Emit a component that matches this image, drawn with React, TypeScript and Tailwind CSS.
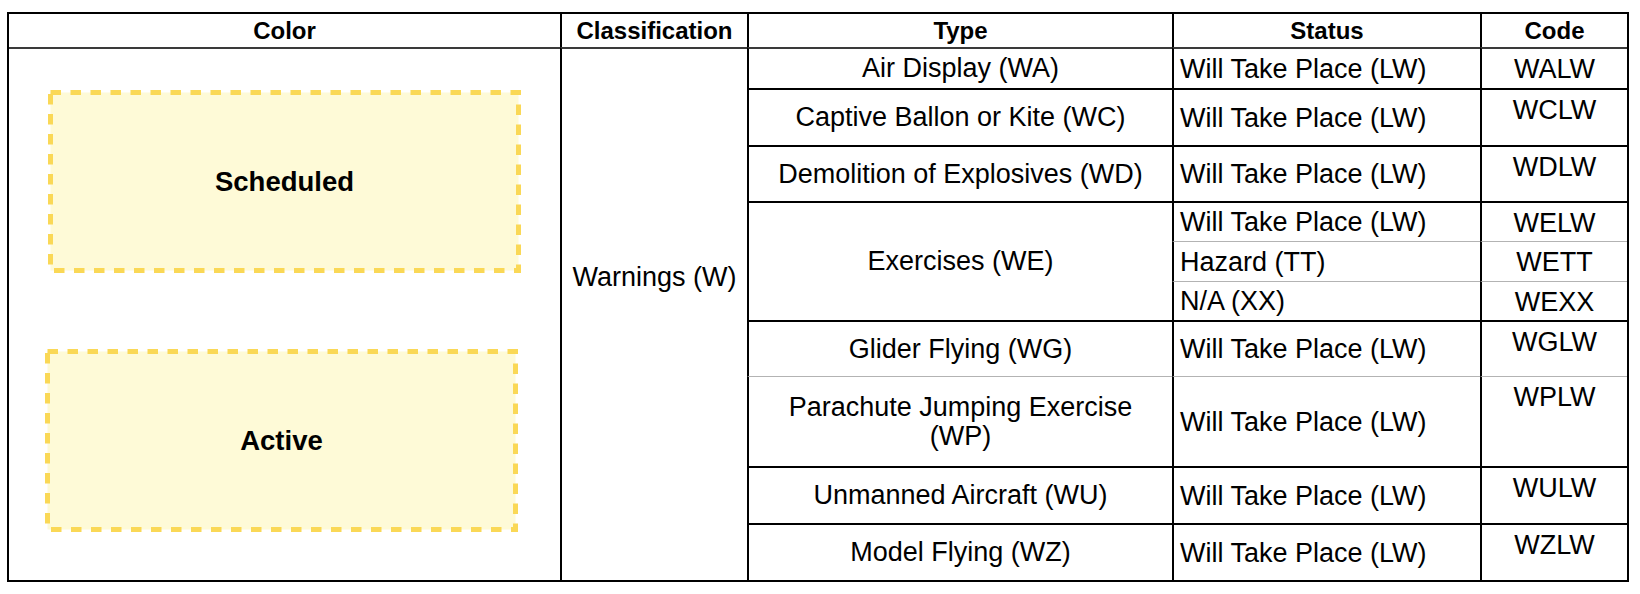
import React from "react";

type B = "hdr" | "black" | "gray";

const topCls: Record<B, string> = {
  hdr: "border-t-2 border-t-[#3a3a3a]",
  black: "border-t-2 border-t-black",
  gray: "border-t border-t-[#b3b3b3]",
};

const rowStart: Record<number, string> = {
  2: "row-start-2",
  3: "row-start-3",
  4: "row-start-4",
  5: "row-start-5",
  6: "row-start-6",
  7: "row-start-7",
  8: "row-start-8",
  9: "row-start-9",
  10: "row-start-10",
  11: "row-start-11",
};

const types: { label: React.ReactNode; row: number; span3?: boolean; b: B }[] = [
  { label: "Air Display (WA)", row: 2, b: "hdr" },
  { label: "Captive Ballon or Kite (WC)", row: 3, b: "black" },
  { label: "Demolition of Explosives (WD)", row: 4, b: "black" },
  { label: "Exercises (WE)", row: 5, span3: true, b: "black" },
  { label: "Glider Flying (WG)", row: 8, b: "black" },
  {
    label: (
      <>
        Parachute Jumping Exercise
        <br />
        (WP)
      </>
    ),
    row: 9,
    b: "gray",
  },
  { label: "Unmanned Aircraft (WU)", row: 10, b: "black" },
  { label: "Model Flying (WZ)", row: 11, b: "black" },
];

const statuses: { status: string; code: string; row: number; b: B }[] = [
  { status: "Will Take Place (LW)", code: "WALW", row: 2, b: "hdr" },
  { status: "Will Take Place (LW)", code: "WCLW", row: 3, b: "black" },
  { status: "Will Take Place (LW)", code: "WDLW", row: 4, b: "black" },
  { status: "Will Take Place (LW)", code: "WELW", row: 5, b: "black" },
  { status: "Hazard (TT)", code: "WETT", row: 6, b: "gray" },
  { status: "N/A (XX)", code: "WEXX", row: 7, b: "gray" },
  { status: "Will Take Place (LW)", code: "WGLW", row: 8, b: "black" },
  { status: "Will Take Place (LW)", code: "WPLW", row: 9, b: "gray" },
  { status: "Will Take Place (LW)", code: "WULW", row: 10, b: "black" },
  { status: "Will Take Place (LW)", code: "WZLW", row: 11, b: "black" },
];

function DashedBox({ label, shift }: { label: string; shift: string }) {
  return (
    <div className={`relative w-[473px] h-[183px] ${shift} flex items-center justify-center`}>
      <svg className="absolute inset-0" width="473" height="183" viewBox="0 0 473 183">
        <rect x="2.5" y="2.5" width="468" height="178" fill="#fefad7" stroke="#fad856" strokeWidth="5" strokeDasharray="10.5 9.5" />
      </svg>
      <span className="relative text-[27.5px] leading-[30px] font-bold text-black">{label}</span>
    </div>
  );
}

export default function App() {
  return (
    <div className="bg-white w-[1640px] h-[594px] pl-[7px] pt-[12px] font-['Liberation_Sans',Arial,Helvetica,sans-serif] text-black">
      <div className="grid w-[1622px] border-2 border-black grid-cols-[551px_187px_425px_308px_147px] grid-rows-[33px_41px_57px_56px_40px_40px_39px_56px_90px_57px_57px]">
        {/* header */}
        <div className="col-start-1 row-start-1 flex items-center justify-center text-[24px] leading-[30px] font-bold">Color</div>
        <div className="col-start-2 row-start-1 border-l-2 border-l-black flex items-center justify-center text-[24px] leading-[30px] font-bold">Classification</div>
        <div className="col-start-3 row-start-1 border-l-2 border-l-black flex items-center justify-center text-[24px] leading-[30px] font-bold">Type</div>
        <div className="col-start-4 row-start-1 border-l-2 border-l-black flex items-center justify-center text-[24px] leading-[30px] font-bold">Status</div>
        <div className="col-start-5 row-start-1 border-l-2 border-l-black flex items-center justify-center text-[24px] leading-[30px] font-bold">Code</div>

        {/* color column */}
        <div className="col-start-1 row-start-2 row-span-10 border-t-2 border-t-[#3a3a3a] flex flex-col pt-[41px] gap-[76px]">
          <DashedBox label="Scheduled" shift="ml-[39px]" />
          <DashedBox label="Active" shift="ml-[36px]" />
        </div>

        {/* classification */}
        <div className="col-start-2 row-start-2 row-span-10 border-l-2 border-l-black border-t-2 border-t-[#3a3a3a] flex items-center justify-center pb-[75px] text-[27px] leading-[30px]">
          Warnings (W)
        </div>

        {/* type */}
        {types.map((t, i) => (
          <div
            key={i}
            className={`col-start-3 ${rowStart[t.row]} ${t.span3 ? "row-span-3" : ""} border-l-2 border-l-black ${topCls[t.b]} flex items-center justify-center text-center px-[6px] text-[27px] leading-[29px]`}
          >
            <span>{t.label}</span>
          </div>
        ))}

        {/* status + code */}
        {statuses.map((s, i) => (
          <React.Fragment key={i}>
            <div className={`col-start-4 ${rowStart[s.row]} border-l-2 border-l-black ${topCls[s.b]} flex items-center pl-[6px] text-[27px] leading-[30px] whitespace-nowrap`}>
              {s.status}
            </div>
            <div className={`col-start-5 ${rowStart[s.row]} border-l-2 border-l-black ${topCls[s.b]} pt-[5px] text-center text-[27px] leading-[30px]`}>
              {s.code}
            </div>
          </React.Fragment>
        ))}
      </div>
    </div>
  );
}
